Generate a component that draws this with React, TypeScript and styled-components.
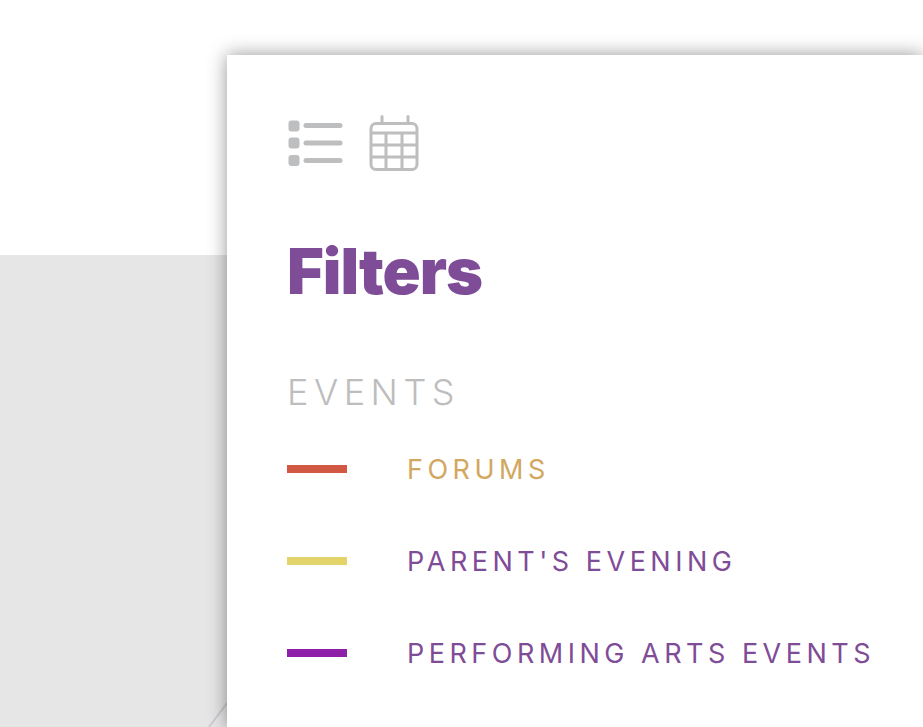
import React from "react";
import styled, { createGlobalStyle } from "styled-components";

const Global = createGlobalStyle`
  html, body { margin: 0; padding: 0; background: #fff; overflow: hidden; }
  #root { height: 727px; }
`;

const Page = styled.div`
  position: relative;
  width: 923px;
  height: 727px;
  overflow: hidden;
  display: flex;
  flex-direction: column;
  font-family: "Inter", "Liberation Sans", sans-serif;
`;

const Header = styled.div`
  height: 255px;
  background: #fff;
`;

const Main = styled.div`
  flex: 1;
  background: #e6e6e6;
`;

const Streak = styled.svg`
  position: absolute;
  left: 200px;
  top: 695px;
`;

const Panel = styled.aside`
  position: absolute;
  left: 227px;
  top: 55px;
  width: 696px;
  height: 672px;
  box-sizing: border-box;
  padding: 60px 0 0 60px;
  background: #fff;
  box-shadow: 0 0 18px rgba(0, 0, 0, 0.42);
`;

const ViewIcons = styled.div`
  display: flex;
  align-items: flex-start;
  gap: 25px;
  height: 57px;
  margin-left: 1px;
`;

const Title = styled.h2`
  margin: 61px 0 0 0;
  font-size: 63px;
  line-height: 76px;
  font-weight: 900;
  letter-spacing: -1px;
  color: #7f4c98;
`;

const SectionLabel = styled.h3`
  margin: 61px 0 0 0;
  font-size: 36px;
  line-height: 44px;
  font-weight: 300;
  letter-spacing: 5.5px;
  color: #bdbdbd;
`;

const FilterList = styled.ul`
  list-style: none;
  margin: 37px 0 0;
  padding: 0;
  display: flex;
  flex-direction: column;
  gap: 56px;
`;

const FilterRow = styled.li`
  display: flex;
  align-items: center;
  gap: 60px;
  height: 36px;
`;

const Swatch = styled.span<{ $color: string }>`
  width: 60px;
  height: 8px;
  flex: none;
  background: ${(p) => p.$color};
`;

const FilterName = styled.span<{ $color: string }>`
  font-size: 27px;
  font-weight: 400;
  letter-spacing: 4.5px;
  white-space: nowrap;
  color: ${(p) => p.$color};
`;

const ListIcon = () => (
  <svg width="56" height="51" viewBox="0 0 56 51" fill="#bdbebf">
    <rect x="0.5" y="5.5" width="11" height="11" rx="3" />
    <rect x="0.5" y="22.5" width="11" height="11" rx="3" />
    <rect x="0.5" y="40" width="11" height="11" rx="3" />
    <rect x="15.5" y="8" width="39" height="5" rx="2.5" />
    <rect x="15.5" y="25.5" width="39" height="5" rx="2.5" />
    <rect x="15.5" y="43" width="39" height="5" rx="2.5" />
  </svg>
);

const CalendarIcon = () => (
  <svg width="50" height="57" viewBox="0 0 50 57" fill="none" stroke="#bdbebf" strokeWidth="3">
    <rect x="2" y="8.5" width="46" height="46" rx="5" />
    <path d="M13 1.5V8M39 1.5V8" strokeLinecap="round" />
    <path d="M2 18H48M2 30H48M2 42H48" />
    <path d="M17 18V54M33 18V54" />
  </svg>
);

const filters = [
  { name: "FORUMS", swatch: "#d15843", text: "#d2a75f" },
  { name: "PARENT'S EVENING", swatch: "#e3d46a", text: "#7f4c98" },
  { name: "PERFORMING ARTS EVENTS", swatch: "#8e1fa8", text: "#7f4c98" },
];

export default function App() {
  return (
    <Page>
      <Global />
      <Header />
      <Main />
      <Streak width="27" height="32" viewBox="0 0 27 32" fill="none">
        <path d="M9 32L27 8" stroke="#cfcad4" strokeWidth="2" />
      </Streak>
      <Panel>
        <ViewIcons>
          <ListIcon />
          <CalendarIcon />
        </ViewIcons>
        <Title>Filters</Title>
        <SectionLabel>EVENTS</SectionLabel>
        <FilterList>
          {filters.map((f) => (
            <FilterRow key={f.name}>
              <Swatch $color={f.swatch} />
              <FilterName $color={f.text}>{f.name}</FilterName>
            </FilterRow>
          ))}
        </FilterList>
      </Panel>
    </Page>
  );
}
